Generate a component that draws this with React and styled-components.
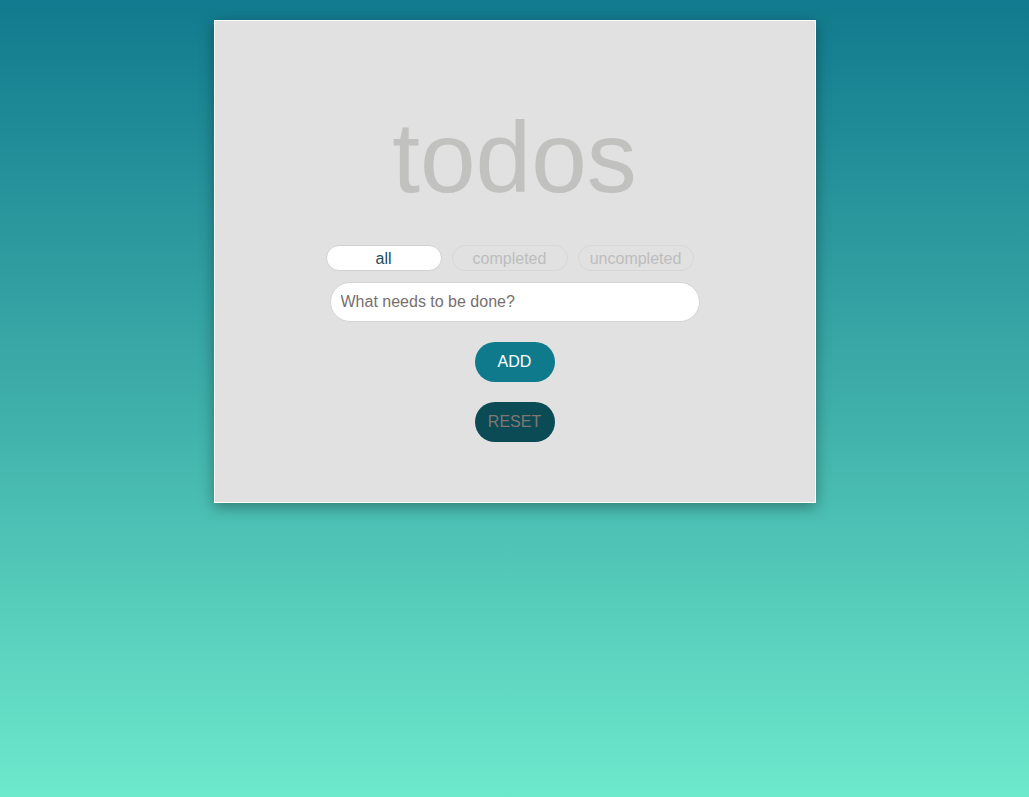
import React, { useState } from 'react';
import styled, { createGlobalStyle } from 'styled-components';

const GlobalStyle = createGlobalStyle`
  html, body {
    margin: 0;
    padding: 0;
  }

  body {
    min-height: 100vh;
    font-family: 'Liberation Sans', Arial, Helvetica, sans-serif;
    background: linear-gradient(to bottom, #117a8e 0%, #3eaea9 50%, #6de9cc 100%);
    background-attachment: fixed;
  }
`;

const Page = styled.div`
  display: flex;
  justify-content: center;
  align-items: flex-start;
  min-height: 100vh;
  padding-top: 20px;
  box-sizing: border-box;
`;

const Card = styled.section`
  display: flex;
  flex-direction: column;
  align-items: center;
  width: 602px;
  box-sizing: border-box;
  padding: 79px 0 60px;
  background-color: #e0e1e0;
  border: 1px solid #ffffff;
  box-shadow: 0 4px 14px rgba(0, 0, 0, 0.35);
`;

const Title = styled.h1`
  margin: 0;
  font-size: 100px;
  line-height: 115px;
  font-weight: 300;
  color: #c1c1c0;
  letter-spacing: 0;
`;

const FilterRow = styled.div`
  display: flex;
  margin-top: 30px;
`;

const FilterButton = styled.button`
  width: 116px;
  height: 26px;
  margin-right: 10px;
  padding: 1px 0 0;
  border-radius: 13px;
  border: 1px solid ${({ $active }) => ($active ? '#d2d2d2' : '#d6d7d6')};
  background-color: ${({ $active }) => ($active ? '#ffffff' : 'transparent')};
  color: ${({ $active }) => ($active ? '#1b4e57' : '#bdbdbd')};
  font-family: 'Liberation Sans', Arial, sans-serif;
  font-size: 16px;
  cursor: pointer;
  outline: none;
`;

const TodoInput = styled.input`
  width: 370px;
  height: 40px;
  margin-top: 11px;
  box-sizing: border-box;
  padding: 0 10px;
  border: 1px solid #d4d4d4;
  border-radius: 20px;
  background-color: #ffffff;
  font-family: 'Liberation Sans', Arial, sans-serif;
  font-size: 16px;
  color: #333;
  outline: none;

  &::placeholder {
    color: #77706f;
  }
`;

const ActionButton = styled.button`
  width: 80px;
  height: 40px;
  margin-top: 20px;
  border: none;
  border-radius: 20px;
  background-color: ${({ $dark }) => ($dark ? '#0a4b56' : '#107a8d')};
  color: ${({ $dark }) => ($dark ? '#827672' : '#ffffff')};
  font-family: 'Liberation Sans', Arial, sans-serif;
  font-size: 16px;
  cursor: pointer;
`;

const FILTERS = ['all', 'completed', 'uncompleted'];

const App = () => {
  const [filter, setFilter] = useState('all');
  const [text, setText] = useState('');

  return (
    <>
      <GlobalStyle />
      <Page>
        <Card>
          <Title>todos</Title>
          <FilterRow>
            {FILTERS.map((name) => (
              <FilterButton
                key={name}
                $active={filter === name}
                onClick={() => setFilter(name)}
              >
                {name}
              </FilterButton>
            ))}
          </FilterRow>
          <TodoInput
            type="text"
            placeholder="What needs to be done?"
            value={text}
            onChange={(e) => setText(e.target.value)}
          />
          <ActionButton>ADD</ActionButton>
          <ActionButton $dark>RESET</ActionButton>
        </Card>
      </Page>
    </>
  );
};

export default App;
